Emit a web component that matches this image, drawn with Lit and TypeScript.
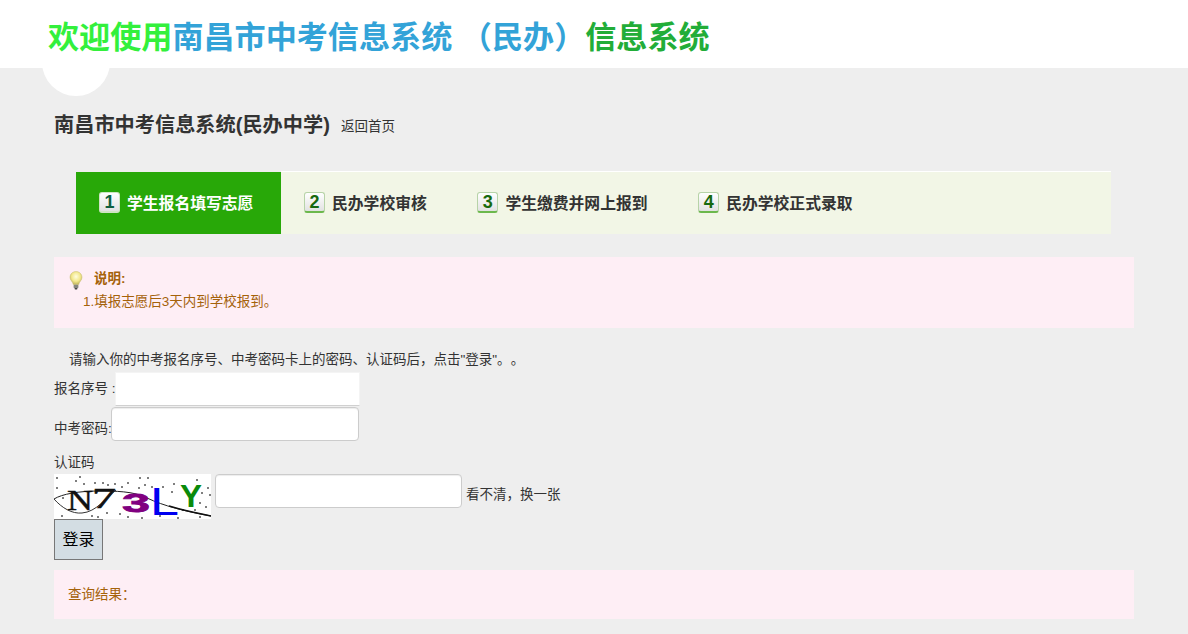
import { LitElement, html, css, svg } from "lit";
import { customElement } from "lit/decorators.js";

const DOTS: [number, number][] = [
  [3,4],[3,14],[22,7],[26,3],[41,9],[49,9],[54,11],[61,10],[9,24],[53,39],[8,42],[38,42],
  [86,4],[94,4],[85,14],[91,11],[98,13],[109,13],[143,6],[154,14],[148,19],[156,21],[146,29],[141,36],[129,36],[124,44],[88,44],[146,43],
  [30,10],[68,13],[74,9],[120,10],[66,40],[74,43],[106,42],[118,18],[152,33],[44,43]
];

@customElement("app-root")
export class AppRoot extends LitElement {
  static styles = css`
    :host { display: block; min-height: 634px; background: #eeeeee; font-family: "Liberation Sans", "Noto Sans CJK SC", sans-serif; font-size: 13.5px; color: #333; position: relative; overflow: hidden; }
    .top { height: 68px; background: #fff; box-sizing: border-box; padding: 8px 0 0 48px; display: flex; align-items: center; }
    .title { font-size: 31.1px; font-weight: 700; line-height: 60px; white-space: pre; position: relative; }
    .g1 { color: #33f03c; } .b1 { color: #33a3d8; } .g2 { color: #22ad38; }
    .circle { position: absolute; left: 42px; top: 28px; width: 68px; height: 68px; border-radius: 50%; background: #fff; }
    .main { width: 1080px; margin: 0 auto; }
    .head { display: flex; align-items: flex-start; padding-top: 44px; }
    h2 { margin: 0; font-size: 20.2px; line-height: 26px; font-weight: 700; color: #333; }
    .back { margin: 4px 0 0 11px; line-height: 22px; color: #333; text-decoration: none; }
    .steps { margin: 33px 23px 0 22px; height: 63px; display: flex; font-size: 15.8px; font-weight: 700; color: #333; }
    .rest { flex: 1; display: flex; background: #f2f6e6; border-top: 1px solid #fff; }
    .step { display: flex; align-items: center; gap: 7px; padding: 0 27.6px 1px 23px; }
    .step.on { background: #28a808; color: #fff; margin-top: 1px; }
    .badge { box-sizing: border-box; width: 21px; height: 21px; border: 1px solid #b7d3a8; border-bottom: 2px solid #6cb84c; border-radius: 3px; background: linear-gradient(#fff, #e2e2e2); display: flex; align-items: center; justify-content: center; font-size: 18px; font-weight: 700; color: #17690f; line-height: 1; }
    .on .badge { border-color: #cfe3c4; color: #0f5f3f; }
    .note { margin-top: 23px; height: 71px; box-sizing: border-box; background: #feeef5; padding: 12px 14px; color: #a5620a; }
    .note-h { display: flex; align-items: flex-start; gap: 10px; font-weight: 700; height: 19px; line-height: 19px; }
    .note-h svg { display: block; margin-top: 2px; }
    .note-b { padding-left: 15px; margin-top: 4px; line-height: 19px; }
    .intro { margin-top: 22px; padding-left: 15px; line-height: 20px; }
    .last-dot { margin-left: 7px; }
    .row { display: flex; align-items: center; }
    .row1 { height: 34px; margin-top: 2px; }
    .row2 { height: 34px; margin-top: 1px; }
    .row label { white-space: pre; margin-right: -1px; }
    .row1 label { margin-bottom: 4px; }
    .row2 label { margin-top: 6px; }
    input { box-sizing: border-box; height: 34px; background: #fff; padding: 0 12px; margin: 0; outline: none; border: 1px solid #ccc; border-radius: 4px; box-shadow: inset 0 1px 1px rgba(0,0,0,.075); }
    .i1 { width: 245px; border-color: #f4f4f4 #f4f4f4 #d0d0d0; border-radius: 0; box-shadow: none; }
    .i2 { width: 248px; }
    .i3 { width: 247px; margin-left: 4px; }
    .cap-label { margin-top: 11px; line-height: 22px; }
    .cap { display: flex; align-items: flex-start; height: 45px; }
    .cap svg { display: block; flex: none; background: #fff; }
    .change { margin: 11px 0 0 4px; line-height: 20px; }
    .btn { display: block; box-sizing: border-box; width: 49px; height: 41px; padding: 0 0 3px; background: #d3dde3; border: 1px solid #777; color: #000; font: 16px "Liberation Sans", "Noto Sans CJK SC", sans-serif; }
    .result { margin-top: 10px; height: 49px; box-sizing: border-box; background: #feeef5; padding: 0 14px 4px; display: flex; align-items: center; color: #a5620a; }
  `;

  private captcha() {
    return html`<svg width="157" height="45" viewBox="0 0 157 45">
      ${DOTS.map(([x, y]) => svg`<circle cx=${x} cy=${y} r="1" fill="#555"></circle>`)}
      <path d="M0 25 C8 20 25 17 45 17 C60 17 80 17 93 24 C110 32 130 37 157 42" fill="none" stroke="#222" stroke-width="1"></path>
      <path d="M115 32 C128 36 142 39 157 42" fill="none" stroke="#111" stroke-width="1.6"></path>
      <path d="M0 25 C8 34 18 40 28 39 C42 38 52 24 62 16" fill="none" stroke="#333" stroke-width="1"></path>
      <text x="13" y="36" font-family="Liberation Serif, serif" font-size="30" textLength="26" lengthAdjust="spacingAndGlyphs" fill="#111" stroke="#111" stroke-width=".4">N</text>
      <text x="38" y="34" font-family="Liberation Serif, serif" font-size="30" textLength="24" lengthAdjust="spacingAndGlyphs" fill="#111" stroke="#111" stroke-width=".6">7</text>
      <text x="68" y="38" font-family="Liberation Sans, sans-serif" font-weight="700" font-size="26" textLength="28" lengthAdjust="spacingAndGlyphs" fill="#800080" stroke="#800080" stroke-width=".8">3</text>
      <text x="96" y="41" font-family="Liberation Sans, sans-serif" font-size="39" textLength="29" lengthAdjust="spacingAndGlyphs" fill="#0000f0">L</text>
      <text x="126" y="33" font-family="Liberation Sans, sans-serif" font-weight="700" font-size="31" textLength="22" lengthAdjust="spacingAndGlyphs" fill="#0a8a0a">Y</text>
    </svg>`;
  }

  render() {
    return html`
      <div class="circle"></div>
      <div class="top"><div class="title"><span class="g1">欢迎使用</span><span class="b1">南昌市中考信息系统 （民办）</span><span class="g2">信息系统</span></div></div>
      <div class="main">
        <div class="head"><h2>南昌市中考信息系统(民办中学)</h2><a class="back" href="#">返回首页</a></div>
        <div class="steps">
          <div class="step on"><span class="badge">1</span>学生报名填写志愿</div>
          <div class="rest">
            <div class="step"><span class="badge">2</span>民办学校审核</div>
            <div class="step"><span class="badge">3</span>学生缴费并网上报到</div>
            <div class="step"><span class="badge">4</span>民办学校正式录取</div>
          </div>
        </div>
        <div class="note">
          <div class="note-h">
            <svg width="16" height="19" viewBox="0 0 16 19">
              <defs><radialGradient id="bulb" cx=".5" cy=".38" r=".6"><stop offset="0" stop-color="#fffde0"></stop><stop offset=".6" stop-color="#f3e88c"></stop><stop offset="1" stop-color="#c0b45c"></stop></radialGradient></defs>
              <path d="M8 0.6 C4.4 0.6 2 3.2 2 6.4 C2 9.2 4.8 10.8 5.4 13.8 L10.6 13.8 C11.2 10.8 14 9.2 14 6.4 C14 3.2 11.6 0.6 8 0.6 Z" fill="url(#bulb)" stroke="#c8bf78" stroke-width=".5"></path>
              <rect x="5.6" y="13.8" width="4.8" height="3.4" rx="1" fill="#85857f"></rect>
              <rect x="6.6" y="17" width="2.8" height="1.4" rx=".7" fill="#444"></rect>
            </svg>
            <span>说明:</span>
          </div>
          <div class="note-b">1.填报志愿后3天内到学校报到。</div>
        </div>
        <div class="intro">请输入你的中考报名序号、中考密码卡上的密码、认证码后，点击"登录"。<span class="last-dot">。</span></div>
        <div class="row row1"><label>报名序号 :</label><input class="i1" type="text" /></div>
        <div class="row row2"><label>中考密码:</label><input class="i2" type="password" /></div>
        <div class="cap-label">认证码</div>
        <div class="cap">${this.captcha()}<input class="i3" type="text" /><span class="change">看不清，换一张</span></div>
        <button class="btn">登录</button>
        <div class="result">查询结果：</div>
      </div>
    `;
  }
}
